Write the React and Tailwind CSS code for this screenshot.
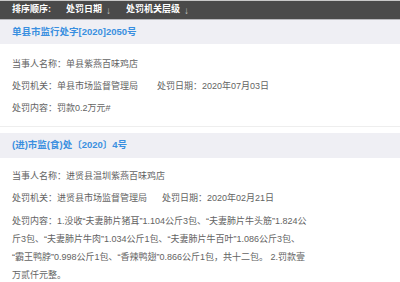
import React from "react";

function Row({ children, className = "" }) {
  return <div className={"flex items-center text-[9px] leading-[13px] text-[#636363] " + className}>{children}</div>;
}

export default function App() {
  return (
    <div className="w-[400px] h-[282px] overflow-hidden bg-white font-['Liberation_Sans','Noto_Sans_CJK_SC',sans-serif]">
      <div className="border-t border-[#c8c8c8] bg-[#4a4a4a] h-[19px] flex items-center pl-[12px] text-white text-[9px] font-bold">
        <span>排序顺序:</span>
        <span className="ml-[15px]">处罚日期</span>
        <span className="ml-[4px] text-[#c4c4c4] font-normal text-[10px]">↓</span>
        <span className="ml-[15px]">处罚机关层级</span>
        <span className="ml-[4px] text-[#c4c4c4] font-normal text-[10px]">↓</span>
      </div>
      <div className="border-t border-[#b8b8bc] bg-[#efeff4] h-[25px] flex items-center pl-[12px] text-[9.5px] font-bold text-[#3a8fe0]">
        单县市监行处字[2020]2050号
      </div>
      <div className="pt-[14px] pl-[12px] flex flex-col gap-[9px] pb-[11px] border-b border-[#eeeeee]">
        <Row>当事人名称：单县紫燕百味鸡店</Row>
        <Row>
          <span>处罚机关：单县市场监督管理局</span>
          <span className="ml-[19px]">处罚日期：2020年07月03日</span>
        </Row>
        <Row>处罚内容：罚款0.2万元#</Row>
      </div>
      <div className="mt-[6px] bg-[#efeff4] h-[25px] flex items-center pl-[12px] text-[9.5px] font-bold text-[#3a8fe0]">
        (进)市监(食)处〔2020〕4号
      </div>
      <div className="pt-[12px] pl-[12px] flex flex-col gap-[9px]">
        <Row>当事人名称：进贤县温圳紫燕百味鸡店</Row>
        <Row>
          <span>处罚机关：进贤县市场监督管理局</span>
          <span className="ml-[15px]">处罚日期：2020年02月21日</span>
        </Row>
        <div className="text-[9px] text-[#636363] leading-[18px] -mt-[2px]">
          处罚内容：1.没收“夫妻肺片猪耳”1.104公斤3包、“夫妻肺片牛头筋”1.824公<br />
          斤3包、“夫妻肺片牛肉”1.034公斤1包、“夫妻肺片牛百叶”1.086公斤3包、<br />
          “霸王鸭脖”0.998公斤1包、“香辣鸭翅”0.866公斤1包，共十二包。 2.罚款壹<br />
          万贰仟元整。
        </div>
      </div>
    </div>
  );
}
